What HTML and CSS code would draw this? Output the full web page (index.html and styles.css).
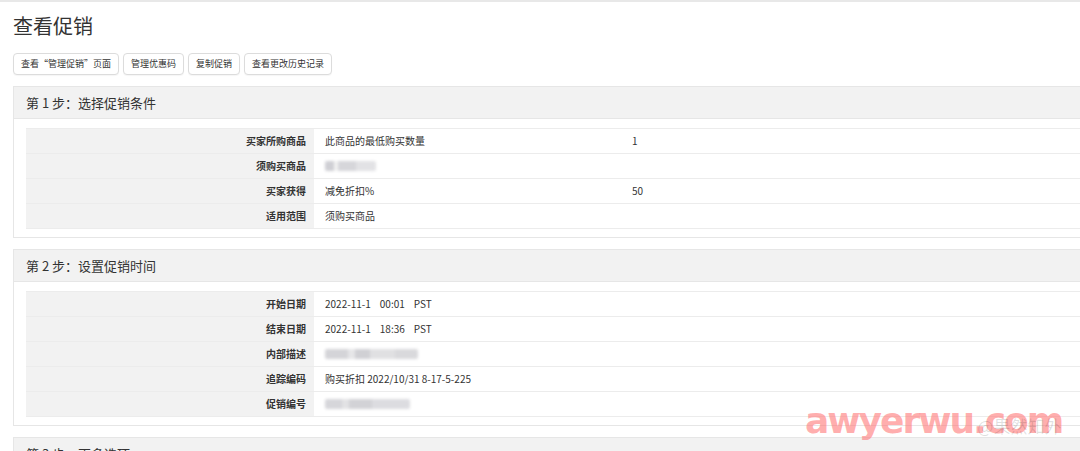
FILE: index.html
```html
<!DOCTYPE html>
<html lang="zh">
<head>
<meta charset="utf-8">
<title>查看促销</title>
<link rel="stylesheet" href="styles.css">
</head>
<body>
<div class="page">
  <h1 class="title">查看促销</h1>
  <div class="actions">
    <button class="btn">查看“管理促销”页面</button>
    <button class="btn">管理优惠码</button>
    <button class="btn">复制促销</button>
    <button class="btn">查看更改历史记录</button>
  </div>

  <section class="panel">
    <div class="panel-head">第 1 步：选择促销条件</div>
    <div class="panel-body">
      <div class="grid">
        <div class="row"><div class="lbl">买家所购商品</div><div class="val">此商品的最低购买数量</div><div class="val2">1</div></div>
        <div class="row"><div class="lbl">须购买商品</div><div class="val"><span class="blur b1"></span></div><div class="val2"></div></div>
        <div class="row"><div class="lbl">买家获得</div><div class="val">减免折扣%</div><div class="val2">50</div></div>
        <div class="row"><div class="lbl">适用范围</div><div class="val">须购买商品</div><div class="val2"></div></div>
      </div>
    </div>
  </section>

  <section class="panel">
    <div class="panel-head">第 2 步：设置促销时间</div>
    <div class="panel-body">
      <div class="grid">
        <div class="row"><div class="lbl">开始日期</div><div class="val wide"><span>2022-11-1</span><span class="t">00:01</span><span class="tz">PST</span></div></div>
        <div class="row"><div class="lbl">结束日期</div><div class="val wide"><span>2022-11-1</span><span class="t">18:36</span><span class="tz">PST</span></div></div>
        <div class="row"><div class="lbl">内部描述</div><div class="val wide"><span class="blur b2"></span></div></div>
        <div class="row"><div class="lbl">追踪编码</div><div class="val wide">购买折扣 2022/10/31 8-17-5-225</div></div>
        <div class="row"><div class="lbl">促销编号</div><div class="val wide"><span class="blur b3"></span></div></div>
      </div>
    </div>
  </section>

  <section class="panel">
    <div class="panel-head">第 3 步：更多选项</div>
  </section>
</div>
<div class="watermark"><span class="wm-main">awyerwu.com</span><span class="wm-sub">@果然知外</span></div>
</body>
</html>
```
FILE: styles.css
```css
html, body {
  margin: 0;
  padding: 0;
  background: #fff;
  overflow: hidden;
}
body {
  border-top: 2px solid #e8e8e8;
  font-family: "Noto Sans CJK SC", "Noto Sans", sans-serif;
  color: #333;
  height: 449px;
  position: relative;
}
.page {
  padding: 0 0 0 13px;
  width: 1100px;
}
.title {
  margin: 0;
  padding-top: 10px;
  height: 41px;
  font-size: 20px;
  font-weight: 400;
  line-height: 28px;
  color: #333;
}
.actions {
  display: flex;
  gap: 4px;
}
.btn {
  height: 22px;
  padding: 0 7px;
  border: 1px solid #dcdcdc;
  border-radius: 4px;
  background: #fff;
  font-family: "Noto Sans CJK SC", sans-serif;
  font-size: 9px;
  color: #333;
  line-height: 20px;
  box-shadow: 0 1px 1px rgba(0,0,0,0.04);
}
.panel {
  margin-top: 11px;
  border: 1px solid #e6e6e6;
  border-right: none;
  background: #fff;
}
.panel-head {
  height: 31px;
  background: #f2f2f2;
  border-bottom: 1px solid #e6e6e6;
  padding-left: 12px;
  font-size: 13px;
  line-height: 31px;
  color: #333;
}
.panel-body {
  padding: 9px 0 8px 12px;
}
.grid {
  border-bottom: 1px solid #ececec;
}
.row {
  display: grid;
  grid-template-columns: 288px 318px 1fr;
  height: 24px;
  border-top: 1px solid #ececec;
  font-size: 10px;
  line-height: 24px;
}
.lbl {
  background: #f2f2f2;
  text-align: right;
  padding-right: 8px;
  font-weight: 700;
  color: #333;
}
.val {
  padding-left: 11px;
  color: #333;
  display: flex;
  align-items: center;
}
.val.wide { grid-column: 2 / 4; }
.t { margin-left: 9px; }
.tz { margin-left: 9px; }
.val2 {
  color: #333;
}
.blur {
  display: inline-block;
  height: 10px;
  border-radius: 2px;
  filter: blur(1.5px);
  background: linear-gradient(90deg, #cfcfd4 0 18%, #f2f2f2 18% 26%, #d6d6da 26% 60%, #e2e2e5 60% 100%);
}
.b1 { width: 51px; }
.b2 { width: 93px; background: linear-gradient(90deg, #d4d4d8 0 25%, #e6e6e8 25% 32%, #d0d0d4 32% 48%, #e0e0e2 48% 75%, #d9d9dc 75% 100%); }
.b3 { width: 85px; background: linear-gradient(90deg, #d6d6da 0 20%, #e2e2e4 20% 28%, #d2d2d6 28% 55%, #dcdce0 55% 100%); }
.watermark {
  position: absolute;
  left: 805px;
  top: 398px;
  display: flex;
  align-items: baseline;
  pointer-events: none;
}
.wm-main {
  font-family: "DejaVu Sans", sans-serif;
  font-weight: 700;
  font-size: 36px;
  letter-spacing: -2px;
  color: rgba(255, 120, 120, 0.6);
}
.wm-sub {
  margin-left: -85px;
  font-family: "Noto Sans CJK SC", sans-serif;
  font-size: 17px;
  color: rgba(0, 0, 0, 0.13);
}
```
